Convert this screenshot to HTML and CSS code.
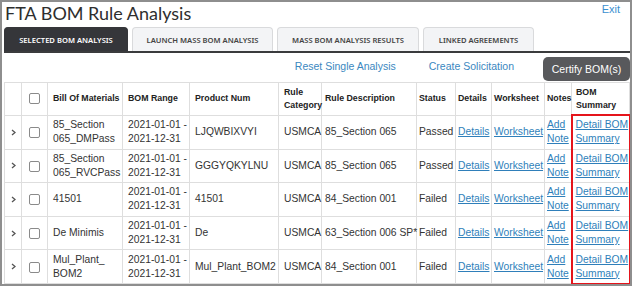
FILE: index.html
```html
<!DOCTYPE html>
<html lang="en">
<head>
    <meta charset="UTF-8">
    <title>FTA BOM Rule Analysis</title>
    <link rel="stylesheet" href="styles.css">
</head>
<body>
<div class="frame">
    <div class="page-head">
        <h1>FTA BOM Rule Analysis</h1>
        <a class="exit" href="#">Exit</a>
    </div>

    <div class="tabs">
        <div class="tab active">Selected BOM Analysis</div>
        <div class="tab tab-launch">Launch Mass BOM Analysis</div>
        <div class="tab tab-results">Mass BOM Analysis Results</div>
        <div class="tab tab-linked">Linked Agreements</div>
    </div>

    <div class="actions">
        <a href="#" class="reset">Reset Single Analysis</a>
        <a href="#" class="solicit">Create Solicitation</a>
        <button type="button">Certify BOM(s)</button>
    </div>

    <table>
        <colgroup>
            <col style="width:17px"><col style="width:26px"><col style="width:75px"><col style="width:67px">
            <col style="width:89px"><col style="width:43px"><col style="width:95px"><col style="width:39px">
            <col style="width:36px"><col style="width:53px"><col style="width:27px"><col style="width:58px">
        </colgroup>
        <thead>
            <tr>
                <th></th>
                <th class="chk"><span class="box"></span></th>
                <th>Bill Of Materials</th>
                <th>BOM Range</th>
                <th>Product Num</th>
                <th>Rule Category</th>
                <th class="desc">Rule Description</th>
                <th class="tight">Status</th>
                <th class="tight">Details</th>
                <th class="tight">Worksheet</th>
                <th class="tight">Notes</th>
                <th class="summary-head">BOM Summary</th>
            </tr>
        </thead>
        <tbody id="bom-list"></tbody>
    </table>
</div>

<script>
    const boms = [
        { nome: '85_Section 065_DMPass', produto: 'LJQWBIXVYI', regra: '85_Section 065', status: 'Passed' },
        { nome: '85_Section 065_RVCPass', produto: 'GGGYQKYLNU', regra: '85_Section 065', status: 'Passed' },
        { nome: '41501', produto: '41501', regra: '84_Section 001', status: 'Failed' },
        { nome: 'De Minimis', produto: 'De', regra: '63_Section 006 SP*', status: 'Failed' },
        { nome: 'Mul_Plant_<wbr>BOM2', produto: 'Mul_Plant_BOM2', regra: '84_Section 001', status: 'Failed' }
    ];

    const lista = document.getElementById('bom-list');
    boms.forEach(bom => {
        const row = document.createElement('tr');
        row.innerHTML = `
            <td class="exp"><svg width="5" height="7" viewBox="0 0 5 7"><polyline points="1,1 4,3.5 1,6" fill="none" stroke="#555" stroke-width="1.3"/></svg></td>
            <td class="chk"><span class="box"></span></td>
            <td>${bom.nome}</td>
            <td>2021-01-01 - 2021-12-31</td>
            <td>${bom.produto}</td>
            <td>USMCA</td>
            <td class="desc">${bom.regra}</td>
            <td class="tight">${bom.status}</td>
            <td class="tight"><a href="#">Details</a></td>
            <td class="tight"><a href="#">Worksheet</a></td>
            <td class="tight"><a href="#">Add Note</a></td>
            <td class="summary"><a href="#">Detail BOM Summary</a></td>`;
        lista.appendChild(row);
    });
</script>
</body>
</html>
```

FILE: styles.css
```css
body {
    margin: 0;
    padding: 0;
    font-family: "Liberation Sans", Arial, sans-serif;
    background-color: #fff;
}

.frame {
    width: 632px;
    height: 286px;
    box-sizing: border-box;
    border: 2px solid #8e8e8e;
    padding: 0 0 0 2px;
    overflow: hidden;
}

.page-head {
    display: flex;
    justify-content: space-between;
    align-items: flex-start;
    height: 25px;
}

h1 {
    margin: 0 0 0 1px;
    font-family: Lato, sans-serif;
    font-weight: 400;
    font-size: 18px;
    line-height: 22px;
    color: #2e2e2e;
}

.exit {
    margin: 1px 10px 0 0;
    font-size: 11px;
    color: #3a8fcf;
    text-decoration: none;
}

.tabs {
    display: flex;
    gap: 4px;
    height: 24px;
    width: 626px;
    border-bottom: 2px solid #3a3b3d;
}

.tab {
    display: flex;
    justify-content: center;
    align-items: center;
    box-sizing: border-box;
    height: 24px;
    border: 1px solid #d9dadc;
    border-bottom: none;
    border-radius: 4px 4px 0 0;
    background-color: #f3f4f6;
    font-family: "Noto Sans", sans-serif;
    font-weight: 600;
    font-size: 7.6px;
    text-transform: uppercase;
    color: #444;
}

.tab.active {
    width: 124px;
    background-color: #35363a;
    border-color: #35363a;
    color: #fff;
}

.tab-launch { width: 141px; }
.tab-results { width: 142px; }
.tab-linked { width: 111px; }

.actions {
    display: flex;
    justify-content: flex-end;
    align-items: center;
    height: 29px;
}

.actions a {
    font-size: 10.5px;
    color: #3a87c0;
    text-decoration: none;
    margin-top: -3px;
}

.reset { margin-right: 33px; }
.solicit { margin-right: 29px; }

button {
    width: 87px;
    height: 24px;
    padding: 0;
    border: none;
    border-radius: 5px;
    background-color: #58595c;
    color: #fff;
    font-family: "Liberation Sans", Arial, sans-serif;
    font-size: 10.5px;
    margin-top: 3px;
}

table {
    width: 625px;
    table-layout: fixed;
    border-collapse: collapse;
    font-size: 10.3px;
    color: #333;
}

table th, table td {
    border: 1px solid #dedede;
    padding: 2.3px 1px 2.3px 5px;
    text-align: left;
    vertical-align: middle;
    line-height: 14px;
}

table th {
    height: 27px;
    padding-top: 2px;
    padding-bottom: 2px;
    font-size: 8.8px;
    line-height: 13px;
    color: #222;
}

table td {
    height: 28px;
}

table .tight {
    padding-left: 2px;
    padding-right: 0;
}

table .desc {
    padding-left: 3px;
    padding-right: 0;
    white-space: nowrap;
}

table td.exp {
    padding-left: 6px;
    padding-right: 0;
}

.exp svg {
    display: block;
}

table .chk {
    padding-left: 0;
    padding-right: 0;
    text-align: center;
}

.box {
    display: inline-block;
    width: 9px;
    height: 9px;
    border: 1px solid #8a8a8a;
    border-radius: 2px;
    vertical-align: middle;
}

td a {
    color: #2f7fba;
    text-decoration: underline;
}

table .summary-head {
    padding-left: 4px;
    padding-right: 0;
}

table .summary {
    padding-left: 3px;
    padding-right: 0;
    border-left: 2px solid #e5141b;
    border-right: 2px solid #e5141b;
}

#bom-list tr:first-child .summary {
    border-top: 2px solid #e5141b;
}

#bom-list tr:last-child .summary {
    border-bottom: 2px solid #e5141b;
}
```
